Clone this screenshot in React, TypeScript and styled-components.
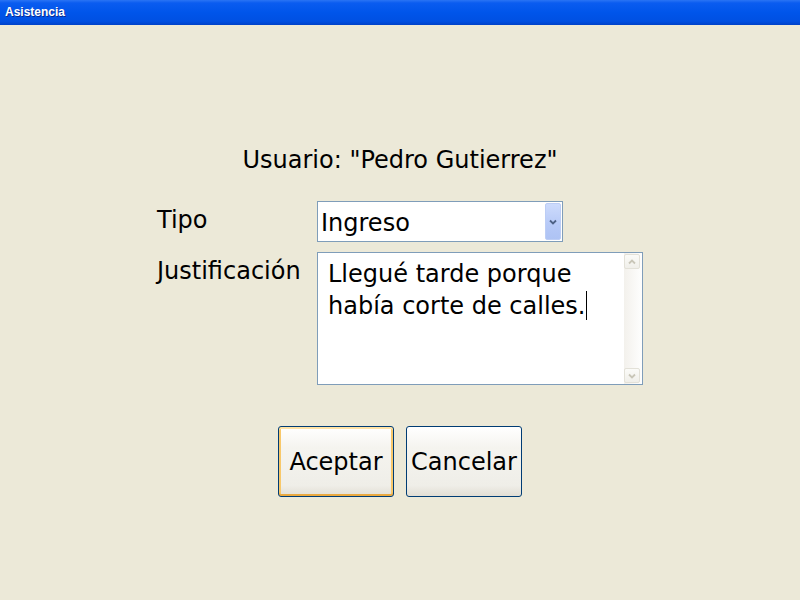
import * as React from "react";
import styled, { createGlobalStyle } from "styled-components";

const GlobalStyle = createGlobalStyle`
  html, body {
    margin: 0;
    padding: 0;
    background: #ece9d8;
  }
  body {
    font-family: "DejaVu Sans", Verdana, sans-serif;
  }
`;

const Window = styled.div`
  width: 800px;
  height: 600px;
  display: flex;
  flex-direction: column;
  background: #ece9d8;
  overflow: hidden;
`;

const TitleBar = styled.div`
  height: 25px;
  flex: none;
  display: flex;
  align-items: center;
  padding-left: 5px;
  background: linear-gradient(#2a74f4 0%, #0a5cf0 12%, #0055ea 50%, #0050e2 85%, #0042c8 100%);
  color: #fff;
  font-family: "Liberation Sans", Arial, sans-serif;
  font-weight: bold;
  font-size: 12px;
  text-shadow: 1px 1px 0 #0a2a90;
  box-sizing: border-box;
  padding-bottom: 2px;
`;

const Body = styled.div`
  display: flex;
  flex-direction: column;
  align-items: center;
  padding-top: 118px;
  color: #000;
  font-size: 24px;
`;

const UserLine = styled.div`
  line-height: 34px;
  margin-bottom: 24px;
`;

const Form = styled.div`
  display: grid;
  grid-template-columns: 160px 326px;
  row-gap: 10px;
`;

const Label = styled.div`
  line-height: 30px;
  padding-top: 4px;
`;

const Combo = styled.div`
  width: 246px;
  height: 41px;
  box-sizing: border-box;
  border: 1px solid #7f9db9;
  background: #fff;
  display: flex;
  align-items: center;
  justify-content: space-between;
  padding: 1px 1px 1px 3px;
`;

const ComboText = styled.span`
  line-height: 36px;
  padding-top: 2px;
`;

const DropButton = styled.div`
  width: 16px;
  height: 100%;
  box-sizing: border-box;
  border: 1px solid #bccdf5;
  border-radius: 2px;
  background: linear-gradient(#cddbfc, #b6c9f7 60%, #aec3f4);
  display: flex;
  align-items: center;
  justify-content: center;
`;

const Memo = styled.div`
  width: 326px;
  height: 133px;
  box-sizing: border-box;
  border: 1px solid #7f9db9;
  background: #fff;
  display: flex;
`;

const MemoText = styled.div`
  flex: 1;
  padding: 5px 6px 0 10px;
  line-height: 32px;
`;

const Caret = styled.span`
  display: inline-block;
  width: 1px;
  height: 29px;
  background: #000;
  vertical-align: -6px;
  margin-left: 1px;
`;

const ScrollBar = styled.div`
  width: 17px;
  display: flex;
  flex-direction: column;
  justify-content: space-between;
  background: linear-gradient(to right, #f3f1ec, #fefefe);
  padding: 1px 1px 1px 0;
`;

const ScrollButton = styled.div`
  width: 16px;
  height: 15px;
  box-sizing: border-box;
  border: 1px solid #e3e1d8;
  border-radius: 2px;
  background: linear-gradient(#fbfbf8, #f0efea);
  display: flex;
  align-items: center;
  justify-content: center;
`;

const Buttons = styled.div`
  display: flex;
  gap: 12px;
  margin-top: 41px;
`;

const PushButton = styled.button<{ $focused?: boolean }>`
  width: 116px;
  height: 71px;
  box-sizing: border-box;
  border: 1px solid #003c74;
  border-radius: 3px;
  font-family: inherit;
  font-size: 24px;
  color: #000;
  padding: 0;
  background: linear-gradient(#ffffff, #f5f4ef 30%, #efeee8 85%, #e2ded4);
  box-shadow: ${(p) =>
    p.$focused
      ? "inset 0 2px 0 #ffe3a6, inset 0 -2px 0 #eaa940, inset 2px 0 0 #f8c86a, inset -2px 0 0 #f8c86a"
      : "none"};
`;

const Chevron = ({ color, up }: { color: string; up?: boolean }) => (
  <svg width="8" height="6" viewBox="0 0 8 6">
    <path
      d={up ? "M1 4.5 L4 1.5 L7 4.5" : "M1 1.5 L4 4.5 L7 1.5"}
      fill="none"
      stroke={color}
      strokeWidth="1.8"
    />
  </svg>
);

export default function App() {
  return (
    <Window>
      <GlobalStyle />
      <TitleBar>Asistencia</TitleBar>
      <Body>
        <UserLine>Usuario: "Pedro Gutierrez"</UserLine>
        <Form>
          <Label>Tipo</Label>
          <Combo>
            <ComboText>Ingreso</ComboText>
            <DropButton>
              <Chevron color="#4d6185" />
            </DropButton>
          </Combo>
          <Label>Justificación</Label>
          <Memo>
            <MemoText>
              Llegué tarde porque
              <br />
              había corte de calles.<Caret />
            </MemoText>
            <ScrollBar>
              <ScrollButton>
                <Chevron color="#c9c6b8" up />
              </ScrollButton>
              <ScrollButton>
                <Chevron color="#c9c6b8" />
              </ScrollButton>
            </ScrollBar>
          </Memo>
        </Form>
        <Buttons>
          <PushButton $focused>Aceptar</PushButton>
          <PushButton>Cancelar</PushButton>
        </Buttons>
      </Body>
    </Window>
  );
}
